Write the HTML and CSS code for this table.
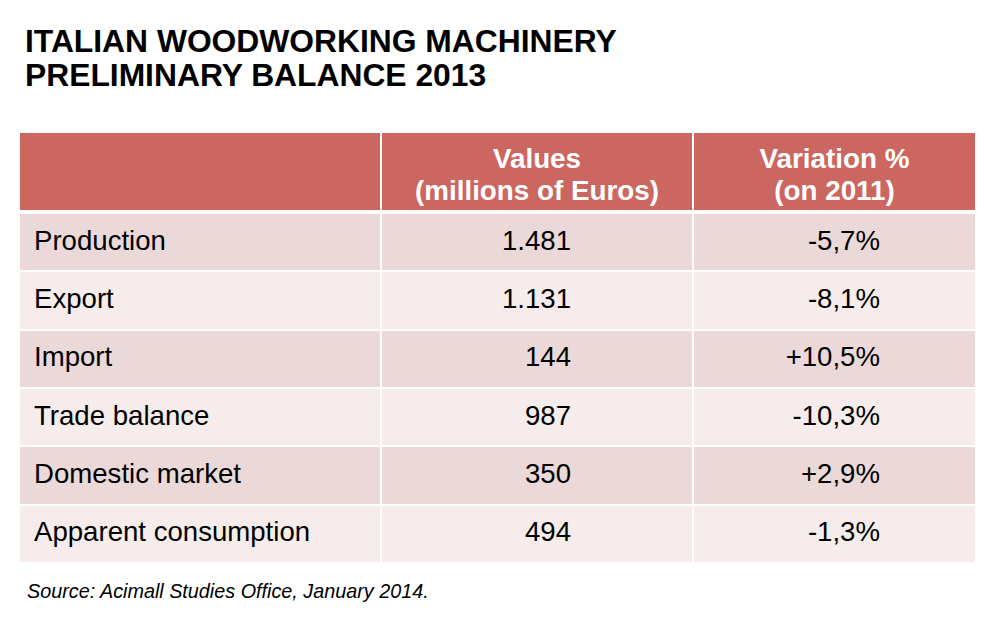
FILE: index.html
```html
<!DOCTYPE html>
<html>
<head>
<meta charset="utf-8">
<link rel="stylesheet" href="styles.css">
</head>
<body>
<div class="page">
  <h1 class="title">ITALIAN WOODWORKING MACHINERY<br>PRELIMINARY BALANCE 2013</h1>
  <div class="table">
    <div class="row head">
      <div class="cell"></div>
      <div class="cell hc">Values<br>(millions of Euros)</div>
      <div class="cell hc">Variation %<br>(on 2011)</div>
    </div>
    <div class="row odd">
      <div class="cell label">Production</div>
      <div class="cell val">1.481</div>
      <div class="cell var">-5,7%</div>
    </div>
    <div class="row even">
      <div class="cell label">Export</div>
      <div class="cell val">1.131</div>
      <div class="cell var">-8,1%</div>
    </div>
    <div class="row odd">
      <div class="cell label">Import</div>
      <div class="cell val">144</div>
      <div class="cell var">+10,5%</div>
    </div>
    <div class="row even">
      <div class="cell label">Trade balance</div>
      <div class="cell val">987</div>
      <div class="cell var">-10,3%</div>
    </div>
    <div class="row odd">
      <div class="cell label">Domestic market</div>
      <div class="cell val">350</div>
      <div class="cell var">+2,9%</div>
    </div>
    <div class="row even">
      <div class="cell label">Apparent consumption</div>
      <div class="cell val">494</div>
      <div class="cell var">-1,3%</div>
    </div>
  </div>
  <p class="source">Source: Acimall Studies Office, January 2014.</p>
</div>
</body>
</html>
```
FILE: styles.css
```css
html, body {
  margin: 0;
  padding: 0;
  background: #ffffff;
}
body {
  font-family: "Liberation Sans", Arial, sans-serif;
  color: #000000;
}
.page {
  width: 1000px;
  height: 633px;
  overflow: hidden;
}
.title {
  margin: 25px 0 0 25px;
  font-size: 31.8px;
  line-height: 33.5px;
  font-weight: bold;
  letter-spacing: 0;
}
.table {
  margin: 41px 0 0 20px;
  width: 955px;
  display: flex;
  flex-direction: column;
  gap: 2px;
}
.row {
  display: grid;
  grid-template-columns: 360px 310px 281px;
  column-gap: 2px;
}
.head {
  height: 77px;
  margin-bottom: 2px;
}
.head .cell {
  background: #cc6661;
}
.hc {
  color: #ffffff;
  font-weight: bold;
  font-size: 27.8px;
  line-height: 32px;
  text-align: center;
  display: flex;
  align-items: center;
  justify-content: center;
  padding-top: 6px;
  box-sizing: border-box;
}
.odd, .even {
  height: 56.33px;
  font-size: 27.6px;
}
.odd .cell { background: #ebd8d8; }
.even .cell { background: #f5eceb; }
.row .cell {
  display: flex;
  align-items: center;
}
.odd .cell, .even .cell {
  padding-bottom: 3px;
  box-sizing: border-box;
}
.label {
  padding-left: 14px;
}
.val {
  justify-content: flex-end;
  padding-right: 121px;
}
.var {
  justify-content: flex-end;
  padding-right: 95px;
}
.source {
  margin: 18px 0 0 27px;
  font-size: 19.8px;
  line-height: 22.7px;
  font-style: italic;
}
```
